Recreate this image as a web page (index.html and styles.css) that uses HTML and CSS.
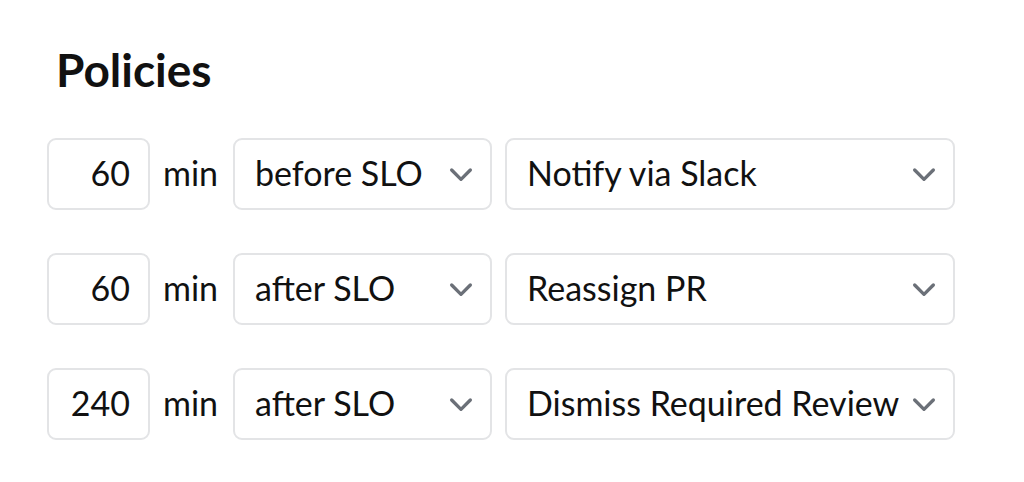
FILE: index.html
```html
<!DOCTYPE html>
<html>
<head>
<meta charset="utf-8">
<link rel="stylesheet" href="styles.css">
</head>
<body>
<section class="policies">
  <h2 class="title">Policies</h2>
  <div class="rows">
    <div class="row">
      <div class="num">60</div>
      <span class="unit">min</span>
      <div class="select when"><span>before SLO</span><svg class="chev" viewBox="0 0 24 24"><path d="M5 9l7 7 7-7"/></svg></div>
      <div class="select action"><span>Notify via Slack</span><svg class="chev" viewBox="0 0 24 24"><path d="M5 9l7 7 7-7"/></svg></div>
    </div>
    <div class="row">
      <div class="num">60</div>
      <span class="unit">min</span>
      <div class="select when"><span>after SLO</span><svg class="chev" viewBox="0 0 24 24"><path d="M5 9l7 7 7-7"/></svg></div>
      <div class="select action"><span>Reassign PR</span><svg class="chev" viewBox="0 0 24 24"><path d="M5 9l7 7 7-7"/></svg></div>
    </div>
    <div class="row">
      <div class="num">240</div>
      <span class="unit">min</span>
      <div class="select when"><span>after SLO</span><svg class="chev" viewBox="0 0 24 24"><path d="M5 9l7 7 7-7"/></svg></div>
      <div class="select action"><span>Dismiss Required Review</span><svg class="chev" viewBox="0 0 24 24"><path d="M5 9l7 7 7-7"/></svg></div>
    </div>
  </div>
</section>
</body>
</html>
```

FILE: styles.css
```css
html, body {
  margin: 0;
  padding: 0;
  background: #ffffff;
}
body {
  font-family: Lato, "Liberation Sans", sans-serif;
  color: #111111;
}
.policies {
  padding: 44px 0 0 47px;
}
.title {
  margin: 0 0 42px 9px;
  font-size: 46px;
  font-weight: 700;
  line-height: 52px;
  color: #111;
}
.rows {
  display: flex;
  flex-direction: column;
  gap: 43px;
}
.row {
  display: flex;
  align-items: center;
  gap: 13px;
  height: 72px;
}
.num {
  box-sizing: border-box;
  width: 103px;
  height: 72px;
  border: 2px solid #e3e4e6;
  border-radius: 9px;
  display: flex;
  align-items: center;
  justify-content: flex-end;
  padding: 0 18px 4px 0;
  font-size: 34px;
}
.unit {
  font-size: 34px;
  width: 57px;
  padding-bottom: 4px;
}
.select {
  box-sizing: border-box;
  height: 72px;
  border: 2px solid #e3e4e6;
  border-radius: 9px;
  display: flex;
  align-items: center;
  justify-content: space-between;
  padding: 0 13px 0 20px;
  font-size: 34px;
  white-space: nowrap;
}
.select span {
  padding-bottom: 4px;
}
.when { width: 259px; }
.action { width: 450px; }
.chev {
  width: 32px;
  height: 32px;
  flex: none;
  fill: none;
  stroke: #6b7078;
  stroke-width: 2.5;
  stroke-linecap: round;
  stroke-linejoin: round;
}
```
